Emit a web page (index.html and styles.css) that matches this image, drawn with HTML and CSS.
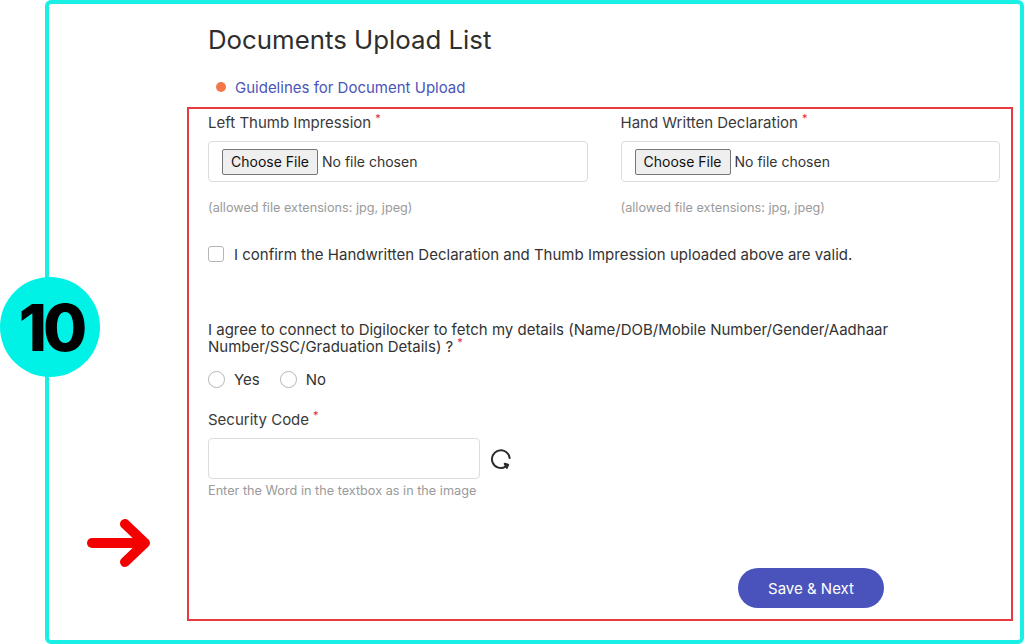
FILE: index.html
```html
<!DOCTYPE html>
<html lang="en">
<head>
<meta charset="utf-8">
<title>Documents Upload List</title>
<link rel="stylesheet" href="styles.css">
</head>
<body>
<div class="stage">
  <div class="frame">
    <h1 class="title">Documents Upload List</h1>
    <div class="guide"><span class="dot"></span><a class="guide-link" href="#">Guidelines for Document Upload</a></div>
    <div class="panel">
      <div class="cols">
        <div class="field">
          <div class="label">Left Thumb Impression<span class="req">*</span></div>
          <div class="filebox"><span class="filebtn">Choose File</span><span class="nofile">No file chosen</span></div>
          <div class="hint">(allowed file extensions: jpg, jpeg)</div>
        </div>
        <div class="field">
          <div class="label">Hand Written Declaration<span class="req">*</span></div>
          <div class="filebox"><span class="filebtn">Choose File</span><span class="nofile">No file chosen</span></div>
          <div class="hint">(allowed file extensions: jpg, jpeg)</div>
        </div>
      </div>
      <div class="confirm"><span class="check"></span><span>I confirm the Handwritten Declaration and Thumb Impression uploaded above are valid.</span></div>
      <div class="question">I agree to connect to Digilocker to fetch my details (Name/DOB/Mobile Number/Gender/Aadhaar Number/SSC/Graduation Details) ?<span class="req">*</span></div>
      <div class="radios">
        <span class="radio"></span><span class="rlabel">Yes</span>
        <span class="radio"></span><span class="rlabel">No</span>
      </div>
      <div class="label seclabel">Security Code<span class="req">*</span></div>
      <div class="secrow">
        <div class="secinput"></div>
        <svg class="refresh" width="26" height="26" viewBox="0 0 24 24" fill="none" stroke="#2a2a2a" stroke-width="1.8" stroke-linecap="round" stroke-linejoin="round"><path d="M20 11.2 A8.2 8.2 0 1 0 16.2 19.1"/><path d="M15.4 16.4 L18.6 17.2 L17.4 20.2 Z" fill="#2a2a2a"/></svg>
      </div>
      <div class="hint sechint">Enter the Word in the textbox as in the image</div>
      <div class="actions"><button class="save">Save &amp; Next</button></div>
    </div>
  </div>
  <div class="badge">10</div>
  <svg class="arrow" width="70" height="60" viewBox="0 0 70 60" fill="none" stroke="#f40000" stroke-width="10" stroke-linecap="round" stroke-linejoin="round"><path d="M6 26 H58"/><path d="M39 7 L59 26 L39 45"/></svg>
</div>
</body>
</html>
```

FILE: styles.css
```css
* { box-sizing: border-box; }
html, body { margin: 0; padding: 0; background: #fff; }
body { font-family: "Inter", "Liberation Sans", sans-serif; color: #3a3a3a; }
.stage { position: relative; width: 1024px; height: 644px; overflow: hidden; }
.frame {
  margin-left: 45px;
  width: 979px;
  height: 644px;
  border: 4px solid #19efe4;
  border-radius: 6px;
  padding: 21px 7px 0 138px;
}
.title {
  margin: 0 0 0 21px;
  font-size: 25.8px;
  line-height: 30px;
  font-weight: 400;
  color: #2e2e2e;
}
.guide {
  display: flex;
  align-items: center;
  height: 20px;
  margin: 22px 0 0 29px;
  font-size: 15px;
}
.dot { width: 10px; height: 10px; border-radius: 50%; background: #f47748; margin-right: 9px; }
.guide-link { color: #4b55b8; text-decoration: none; }
.panel {
  margin-top: 10px;
  border: 2px solid #e63b40;
  padding: 4px 11px 11px 19px;
  font-size: 15px;
}
.cols { display: grid; grid-template-columns: 1fr 1fr; column-gap: 33px; }
.label { line-height: 20px; color: #3a3a3a; }
.req { color: #e32b2b; font-size: 11px; line-height: 0; vertical-align: 6px; margin-left: 4px; }
.filebox {
  margin-top: 8px;
  height: 41px;
  border: 1px solid #dcdcdc;
  border-radius: 4px;
  display: flex;
  align-items: center;
  padding-left: 13px;
}
.filebtn {
  height: 26px;
  line-height: 24px;
  padding: 0 8px;
  border: 1px solid #767676;
  border-radius: 2px;
  background: #efefef;
  color: #111;
  font-size: 14px;
}
.nofile { margin-left: 4px; color: #333; font-size: 14px; }
.hint { color: #9a9a9a; font-size: 12.7px; line-height: 18px; margin-top: 17px; }
.confirm { display: flex; align-items: center; height: 20px; margin-top: 27px; color: #333; }
.check { width: 16px; height: 16px; border: 1px solid #b5b5b5; border-radius: 3px; margin-right: 10px; }
.question { margin-top: 57px; line-height: 17px; color: #333; }
.radios { display: flex; align-items: center; height: 20px; margin-top: 14px; color: #333; }
.radio { width: 17px; height: 17px; border: 1px solid #b5b5b5; border-radius: 50%; margin-right: 9px; }
.rlabel { margin-right: 20px; }
.seclabel { margin-top: 21px; }
.secrow { display: flex; align-items: center; margin-top: 8px; }
.secinput { width: 272px; height: 41px; border: 1px solid #dcdcdc; border-radius: 4px; }
.refresh { margin-left: 8px; }
.sechint { margin-top: 3px; line-height: 18px; }
.actions { margin-top: 68px; padding-left: 530px; }
.save {
  width: 146px;
  height: 40px;
  border: none;
  border-radius: 20px;
  background: #4a53bc;
  color: #fff;
  font-family: "Inter", "Liberation Sans", sans-serif;
  font-size: 15px;
}
.badge {
  position: absolute;
  left: 0;
  top: 277px;
  width: 100px;
  height: 100px;
  border-radius: 50%;
  background: #00f2e6;
  color: #000;
  font-family: "Inter", "Liberation Sans", sans-serif;
  font-weight: 800;
  font-size: 64px;
  letter-spacing: -4px;
  display: flex;
  align-items: center;
  justify-content: center;
  padding-left: 2px;
}
.arrow { position: absolute; left: 86px; top: 517px; }
```
